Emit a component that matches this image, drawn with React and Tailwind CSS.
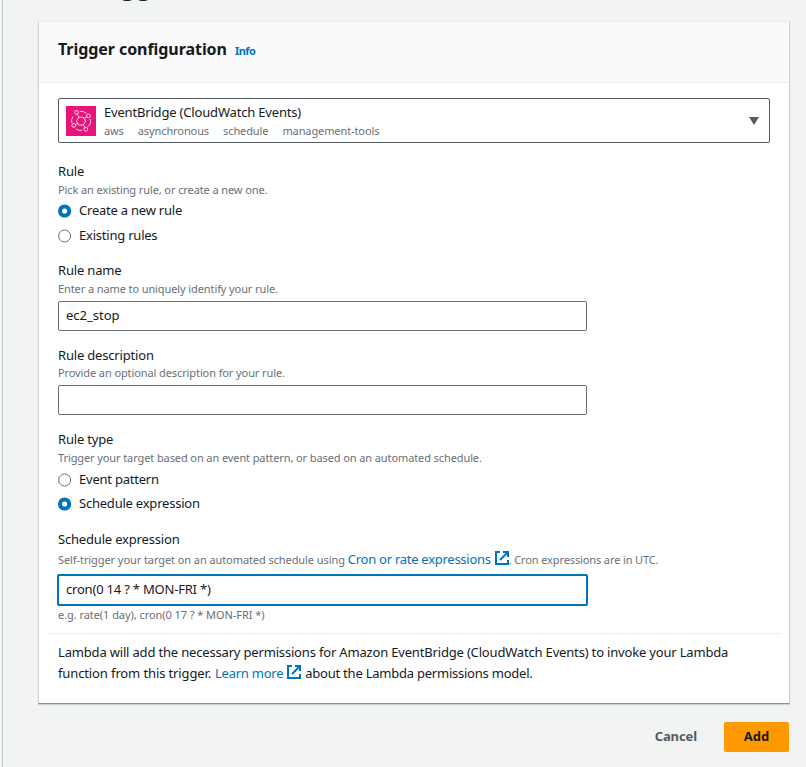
import React from "react";

function Label({ children, className = "" }) {
  return <div className={`h-5 whitespace-nowrap text-[13px] leading-5 tracking-[-0.18px] ${className}`}>{children}</div>;
}

function Hint({ children, className = "" }) {
  return <div className={`h-4 whitespace-nowrap text-[11px] leading-4 tracking-[-0.1px] text-[#687078] ${className}`}>{children}</div>;
}

function Radio({ checked, children, className = "" }) {
  return (
    <label className={`flex h-5 items-center whitespace-nowrap text-[13px] leading-5 tracking-[-0.22px] ${className}`}>
      <svg viewBox="0 0 14 14" className="mt-[2px] mr-[7px] h-[14px] w-[14px] shrink-0">
        {checked ? (
          <circle cx="6.6" cy="7" r="4.6" fill="#fff" stroke="#0073bb" strokeWidth="4" />
        ) : (
          <circle cx="6.6" cy="7" r="6" fill="#fff" stroke="#687078" />
        )}
      </svg>
      {children}
    </label>
  );
}

function ExternalIcon({ className = "" }) {
  return (
    <svg viewBox="0 0 14 14" fill="none" stroke="#0073bb" strokeWidth="2" className={`inline-block h-[14px] w-[14px] shrink-0 ${className}`}>
      <path d="M5 1H1v12h12V9" />
      <path d="M8 1h5v5M13 1L5 9" />
    </svg>
  );
}

function EventBridgeIcon() {
  return (
    <svg viewBox="0 0 30 30" fill="none" stroke="#fff" strokeWidth="0.8" className="mt-px h-[30px] w-[30px] shrink-0 bg-[#e7157b]">
      <path d="M12.7 11.2h4.6l2.3 3.9-2.3 3.9h-4.6l-2.3-3.9z" />
      <circle cx="10.6" cy="6.4" r="1.9" />
      <circle cx="22.4" cy="9.9" r="1.9" />
      <circle cx="7.8" cy="19.4" r="1.9" />
      <circle cx="19.8" cy="23.3" r="1.9" />
      <path d="M11.4 8.2l1.5 3M20.7 10.8l-2.6 1.7M9.5 18.5l2.3-1.2M19 21.5l-1.6-2.5" />
      <path d="M14 5.3q4-.4 6.3 2M24.2 13q1 2.6-.3 5.8l-2.6 2M16 24.5q-3.5.4-6-1.6M5.8 17q-.9-3.3 1-6.4" />
    </svg>
  );
}

export default function App() {
  return (
    <div className="flex h-[767px] w-[806px] overflow-hidden bg-[#f2f3f3] pl-[2px] font-['Noto_Sans',sans-serif] text-[#16191f]">
      <div className="w-px shrink-0 bg-[#c3c9cb]" />
      <div className="flex w-full flex-col pr-[17px] pl-[35px]">
        <div className="flex h-[21px] shrink-0 items-end overflow-hidden">
          <h1 className="mb-[22px] h-7 text-[26px] leading-7">Add trigger</h1>
        </div>
        <main className="h-[683px] w-[752px] shrink-0 border border-[#cfd5d6] border-t-[#eaeded] border-b-[#879196] bg-white shadow-[0_1px_1px_rgba(0,28,36,0.15)]">
          <header className="flex h-[61px] items-baseline border-b border-[#eaeded] bg-[#fafafa] pt-[15px] pl-[19px]">
            <h2 className="text-[16px] leading-6 font-bold tracking-[-0.06px]">Trigger configuration</h2>
            <a className="ml-2 text-[11px] font-bold tracking-[-0.5px] text-[#0073bb]">Info</a>
          </header>
          <div className="flex flex-col px-[19px] pt-[15px]">
            <div className="flex h-[45px] items-center rounded-[2px] border border-[#545b64] pr-[10px] pl-[7px]">
              <EventBridgeIcon />
              <div className="mb-px ml-2 flex-1">
                <Label className="tracking-[-0.15px]">EventBridge (CloudWatch Events)</Label>
                <Hint className="flex gap-[14px] pt-px">
                  <span>aws</span>
                  <span>asynchronous</span>
                  <span>schedule</span>
                  <span>management-tools</span>
                </Hint>
              </div>
              <svg viewBox="0 0 10 8" className="h-2 w-[10px]"><path d="M0 0h10L5 8z" fill="#545b64" /></svg>
            </div>

            <Label className="mt-[18px]">Rule</Label>
            <Hint className="mt-px">Pick an existing rule, or create a new one.</Hint>
            <Radio checked className="mt-[2px]">Create a new rule</Radio>
            <Radio className="mt-[5px]">Existing rules</Radio>

            <Label className="mt-[15px]">Rule name</Label>
            <Hint className="mt-px">Enter a name to uniquely identify your rule.</Hint>
            <div className="mt-1 flex h-[30px] w-[529px] items-center rounded-[2px] border border-[#687078] pl-[7px] text-[13px]">ec2_stop</div>

            <Label className="mt-[14px]">Rule description</Label>
            <Hint>Provide an optional description for your rule.</Hint>
            <div className="mt-1 h-[30px] w-[529px] rounded-[2px] border border-[#687078]" />

            <Label className="mt-[14px]">Rule type</Label>
            <Hint className="mt-px">Trigger your target based on an event pattern, or based on an automated schedule.</Hint>
            <Radio className="mt-[3px]">Event pattern</Radio>
            <Radio checked className="mt-[4px]">Schedule expression</Radio>

            <Label className="mt-[16px]">Schedule expression</Label>
            <Hint className="mt-[2px] flex items-center">
              <span className="pt-px tracking-[-0.08px]">Self-trigger your target on an automated schedule using</span>
              <a className="ml-[3px] text-[13px] tracking-[-0.27px] text-[#0073bb]">Cron or rate expressions</a>
              <ExternalIcon className="mb-[3px] ml-1" />
              <span className="pt-px tracking-[-0.12px]">. Cron expressions are in UTC.</span>
            </Hint>
            <div className="mt-[7px] -ml-px flex h-8 w-[531px] items-center rounded-[2px] border-2 border-[#0073bb] pl-[7px] text-[13px] tracking-[-0.2px]">cron(0 14 ? * MON-FRI *)</div>
            <Hint className="mt-[1px] tracking-[-0.06px]">e.g. rate(1 day), cron(0 17 ? * MON-FRI *)</Hint>
            <div className="-mx-[10px] mt-[10px] h-px bg-[#eaeded]" />
            <div className="mt-[8px] whitespace-nowrap text-[13px] leading-[21px] tracking-[-0.175px]">
              <div>Lambda will add the necessary permissions for Amazon EventBridge (CloudWatch Events) to invoke your Lambda</div>
              <div className="flex h-[21px] items-center">
                <span className="tracking-[-0.12px]">function from this trigger.</span>
                <a className="ml-1 tracking-[-0.25px] text-[#0073bb]">Learn more</a>
                <ExternalIcon className="mb-1 ml-1" />
                <span className="ml-1 tracking-[-0.23px]">about the Lambda permissions model.</span>
              </div>
            </div>
          </div>
        </main>
        <footer className="mt-[18px] flex h-[30px] w-[751px] shrink-0 items-center justify-end">
          <button className="mr-[27px] text-[13px] font-bold tracking-[-0.1px] text-[#545b64]">Cancel</button>
          <button className="h-[30px] w-[65px] rounded-[2px] bg-[#ff9900] text-[13px] font-bold">Add</button>
        </footer>
      </div>
    </div>
  );
}
